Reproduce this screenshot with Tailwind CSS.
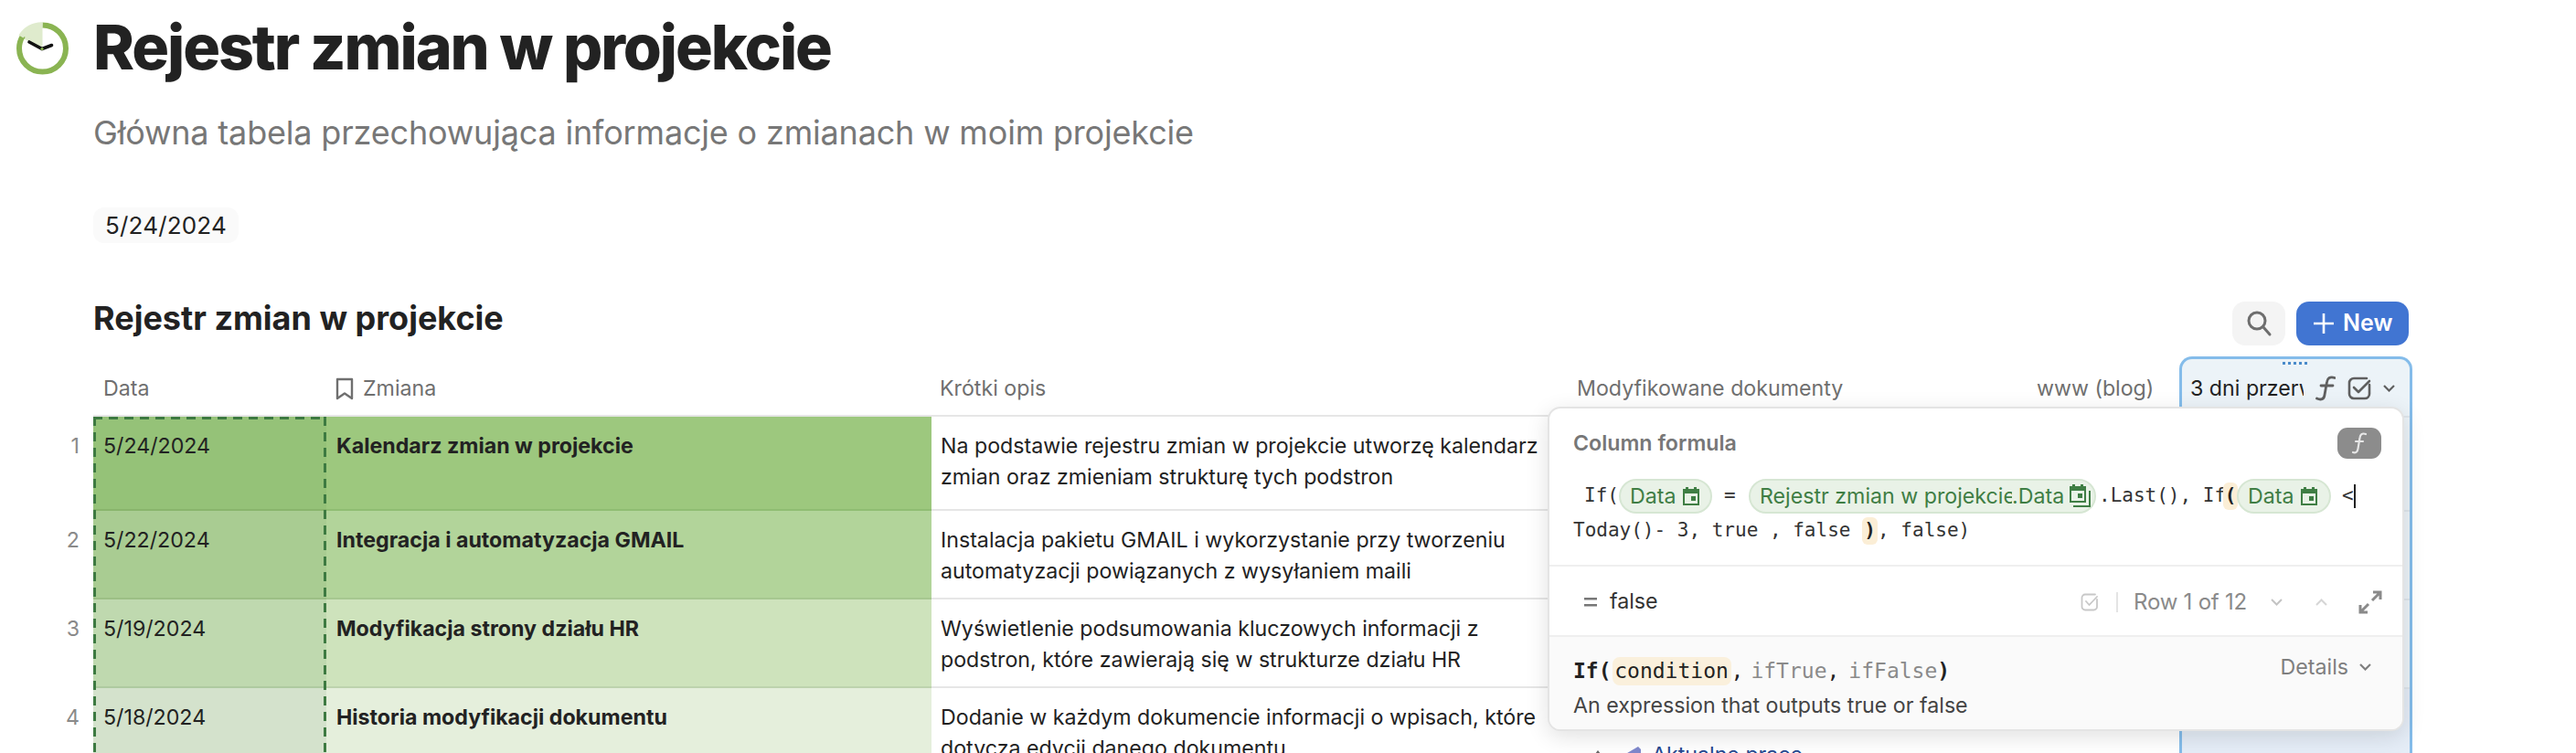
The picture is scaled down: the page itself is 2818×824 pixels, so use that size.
<!DOCTYPE html>
<html lang="pl">
<head>
<meta charset="utf-8">
<title>Rejestr zmian w projekcie</title>
<script src="https://cdn.jsdelivr.net/npm/@tailwindcss/browser@4"></script>
</head>
<body class="bg-white">
<div class="relative w-[2818px] h-[824px] overflow-hidden bg-white font-['Inter',sans-serif] text-[23.2px] text-[#222]">

  <!-- Page header -->
  <div class="flex h-[102px] items-center pl-[18px]">
    <svg class="w-[57px] h-[58px] shrink-0 mt-[3px]" viewBox="0 0 57 58">
      <path d="M28.5 29 L28.5 3 A26 26 0 0 0 5 17 Z" fill="#dfebcd"/>
      <circle cx="28.5" cy="29" r="25.5" fill="none" stroke="#8ab452" stroke-width="6" stroke-dasharray="134 26.3" stroke-dashoffset="0" transform="rotate(-90 28.5 29)"/>
      <path d="M5 16 A26 26 0 0 1 28.5 3.2" fill="none" stroke="#dfebcd" stroke-width="6"/>
      <path d="M14 22 L28 29.5 L38.5 25.5" fill="none" stroke="#111" stroke-width="3.6" stroke-linecap="round"/>
      <circle cx="28" cy="29.5" r="1.6" fill="#8ab452"/>
    </svg>
    <h1 class="ml-[27px] text-[68px] leading-[80px] font-extrabold tracking-[-2.07px] text-[#222]">Rejestr zmian w projekcie</h1>
  </div>

  <!-- Subtitle -->
  <p class="mt-[23px] ml-[102px] h-[40px] text-[36px] leading-[40px] tracking-[-0.18px] text-[#777]">Główna tabela przechowująca informacje o zmianach w moim projekcie</p>

  <!-- Date chip -->
  <div class="mt-[62px] ml-[102px] flex h-[39px] w-[159px] items-center justify-center rounded-[12px] bg-[#fafafa] text-[26px] tracking-[0.19px] text-[#222]">5/24/2024</div>

  <!-- Table toolbar -->
  <div class="mt-[64px] flex h-[48px] w-[2635px] items-start pl-[102px]">
    <h2 class="h-[36px] text-[36px] leading-[36px] font-bold text-[#222]">Rejestr zmian w projekcie</h2>
    <div class="ml-auto flex gap-[12px]">
      <button class="flex h-[48px] w-[58px] items-center justify-center rounded-[14px] bg-[#f4f4f4]">
        <svg class="w-[30px] h-[30px]" viewBox="0 0 30 30" fill="none" stroke="#6e6e6e" stroke-width="3" stroke-linecap="round"><circle cx="13" cy="12" r="9"/><path d="M20 19 L27 27"/></svg>
      </button>
      <button class="flex h-[48px] w-[123px] items-center rounded-[14px] bg-[#4175d2] pl-[19px] text-[25px] font-semibold text-white">
        <svg class="w-[22px] h-[22px] mr-[10px]" viewBox="0 0 22 22" fill="none" stroke="#fff" stroke-width="2.6"><path d="M11 0 V22 M0 11 H22"/></svg>New
      </button>
    </div>
  </div>

  <!-- Table -->
  <div class="relative mt-[12px] flex h-[434px]">
    <!-- Row numbers -->
    <div class="w-[102px] shrink-0 pt-[66px] text-right text-[#8a8a8a]">
      <div class="h-[103px] pt-[15px] pr-[15px] leading-[34px]">1</div>
      <div class="h-[97px] pt-[15px] pr-[15px] leading-[34px]">2</div>
      <div class="h-[97px] pt-[15px] pr-[15px] leading-[34px]">3</div>
      <div class="h-[97px] pt-[15px] pr-[15px] leading-[34px]">4</div>
    </div>

    <div class="relative w-[2282px] shrink-0">
      <!-- Header row -->
      <div class="flex h-[66px] items-start border-b-[2px] border-[#e6e6e6] pt-[20px] leading-[30px] text-[#6f6f6f]">
        <div class="w-[255px] pl-[11px]">Data</div>
        <div class="flex w-[662px] items-center pl-[10px]">
          <svg class="w-[20px] h-[25px] mr-[10px]" viewBox="0 0 20 25" fill="none" stroke="#6f6f6f" stroke-width="2.4" stroke-linejoin="round"><path d="M2 2 H18 V23 L10 17.5 L2 23 Z"/></svg>Zmiana
        </div>
        <div class="w-[696px] pl-[9px]">Krótki opis</div>
        <div class="w-[503px] pl-[10px]">Modyfikowane dokumenty</div>
        <div class="pl-[10px]">www (blog)</div>
      </div>

      <!-- Row 1 -->
      <div class="flex h-[103px] border-b-[2px] border-[#e6e6e6] leading-[34px]">
        <div class="w-[255px] -mb-[2px] border-b-[2px] border-[#89b56c] bg-[#95c278] pt-[15px] pl-[11px]">5/24/2024</div>
        <div class="w-[662px] -mb-[2px] border-b-[2px] border-[#8fbd72] bg-[#9dc87e] pt-[15px] pl-[11px] font-bold">Kalendarz zmian w projekcie</div>
        <div class="w-[690px] pt-[15px] pl-[10px]">Na podstawie rejestru zmian w projekcie utworzę kalendarz<br>zmian oraz zmieniam strukturę tych podstron</div>
      </div>
      <!-- Row 2 -->
      <div class="flex h-[97px] border-b-[2px] border-[#e6e6e6] leading-[34px]">
        <div class="w-[255px] -mb-[2px] border-b-[2px] border-[#9cbf85] bg-[#a9cc92] pt-[15px] pl-[11px]">5/22/2024</div>
        <div class="w-[662px] -mb-[2px] border-b-[2px] border-[#a6c790] bg-[#b2d49a] pt-[15px] pl-[11px] font-bold">Integracja i automatyzacja GMAIL</div>
        <div class="w-[690px] pt-[15px] pl-[10px]">Instalacja pakietu GMAIL i wykorzystanie przy tworzeniu<br>automatyzacji powiązanych z wysyłaniem maili</div>
      </div>
      <!-- Row 3 -->
      <div class="flex h-[97px] border-b-[2px] border-[#e6e6e6] leading-[34px]">
        <div class="w-[255px] -mb-[2px] border-b-[2px] border-[#aecaa0] bg-[#bfd9af] pt-[15px] pl-[11px]">5/19/2024</div>
        <div class="w-[662px] -mb-[2px] border-b-[2px] border-[#bdd3ad] bg-[#cee3bc] pt-[15px] pl-[11px] font-bold">Modyfikacja strony działu HR</div>
        <div class="w-[690px] pt-[15px] pl-[10px]">Wyświetlenie podsumowania kluczowych informacji z<br>podstron, które zawierają się w strukturze działu HR</div>
      </div>
      <!-- Row 4 -->
      <div class="flex h-[97px] leading-[34px]">
        <div class="w-[255px] bg-[#d4e2cc] pt-[15px] pl-[11px]">5/18/2024</div>
        <div class="w-[662px] bg-[#e5efdc] pt-[15px] pl-[11px] font-bold">Historia modyfikacji dokumentu</div>
        <div class="w-[696px] pt-[15px] pl-[10px]">Dodanie w każdym dokumencie informacji o wpisach, które<br>dotyczą edycji danego dokumentu</div>
        <div class="flex items-start pl-[30px] text-[#26478f]">
          <svg class="mt-[68px] w-[6px] h-[4px] mr-[24px]" viewBox="0 0 6 4"><path d="M0 4 L3 0 L6 4 Z" fill="#666"/></svg>
          <svg class="mt-[64px] w-[20px] h-[10px] mr-[12px]" viewBox="0 0 20 10"><path d="M0 10 L17 0 L20 3 L20 10 Z" fill="#7f88cc"/></svg>
          <span class="mt-[56px]">Aktualne prace</span>
        </div>
      </div>

      <!-- Dashed selection over the Data column -->
      <svg class="absolute left-0 top-[66px] w-[255px] h-[368px]" viewBox="0 0 255 368" fill="none" stroke="#3d7a41" stroke-width="3" stroke-dasharray="10 7">
        <path d="M0 1.5 H255"/>
        <path d="M1.5 0 V368"/>
        <path d="M253.5 0 V368"/>
      </svg>
    </div>

    <!-- Selected formula column -->
    <div class="w-[255px] shrink-0 rounded-t-[14px] border-x-[3px] border-t-[3px] border-[#84bcea] bg-[#ecf3f8]">
      <div class="flex justify-center gap-[3px] pt-[3px] pr-[2px]">
        <i class="block h-[3px] w-[3px] bg-[#4a8bcb]"></i><i class="block h-[3px] w-[3px] bg-[#4a8bcb]"></i><i class="block h-[3px] w-[3px] bg-[#4a8bcb]"></i><i class="block h-[3px] w-[3px] bg-[#4a8bcb]"></i><i class="block h-[3px] w-[3px] bg-[#4a8bcb]"></i>
      </div>
      <div class="flex h-[56px] items-center pb-[4px] pl-[9px]">
        <span class="w-[124px] overflow-hidden whitespace-nowrap">3 dni przerwy</span>
        <svg class="w-[22px] h-[28px] ml-[13px]" viewBox="0 0 22 28" fill="none" stroke="#5f5f5f" stroke-width="2.8" stroke-linecap="round"><path d="M21 2.5 C16 0.5 13 3 12.5 7 L10 21 C9.5 26 6 27 1.5 25 M6 11 H19"/></svg>
        <svg class="w-[26px] h-[26px] ml-[13px]" viewBox="0 0 26 26" fill="none" stroke="#5f5f5f" stroke-width="2.6" stroke-linecap="round" stroke-linejoin="round"><path d="M24 9 V19 A5 5 0 0 1 19 24 H7 A5 5 0 0 1 2 19 V7 A5 5 0 0 1 7 2 H21"/><path d="M7 12 L12 17 L24 5"/></svg>
        <svg class="w-[13px] h-[8px] ml-[13px]" viewBox="0 0 13 8" fill="none" stroke="#5f5f5f" stroke-width="2.2"><path d="M1 1 L6.5 6.5 L12 1"/></svg>
      </div>
      <div class="h-[103px] border-t-[2px] border-[#dfe6ec]"></div>
      <div class="h-[97px] border-t-[2px] border-[#dfe6ec]"></div>
      <div class="h-[97px] border-t-[2px] border-[#dfe6ec]"></div>
      <div class="h-[97px] border-t-[2px] border-[#dfe6ec] bg-[#e5edf7]"></div>
    </div>
  </div>

  <!-- Formula popover -->
  <div class="absolute left-[1693px] top-[445px] flex h-[355px] w-[937px] flex-col overflow-hidden rounded-[14px] border-[2px] border-[#e4e4e4] bg-white shadow-[0_6px_24px_rgba(0,0,0,0.12)]">
    <div class="h-[173px] shrink-0 border-b-[2px] border-[#efefef] pl-[26px]">
      <div class="flex h-[77px] items-start pr-[23px] pt-[21px]">
        <span class="mt-[0px] font-semibold leading-[34px] text-[#777]">Column formula</span>
        <span class="ml-auto flex h-[34px] w-[48px] items-center justify-center rounded-[11px] bg-[#8c8c8c]">
          <svg class="w-[16px] h-[24px]" viewBox="0 0 16 24" fill="none" stroke="#e6e6e6" stroke-width="2.2" stroke-linecap="round"><path d="M15 2 C11 0.5 9 2.5 8.5 6 L6.5 18 C6 22 3.5 23 1 22 M4 10 H12"/></svg>
        </span>
      </div>
      <!-- Line 1 -->
      <div class="flex h-[38px] items-center font-['DejaVu_Sans_Mono',monospace] text-[21px] text-[#333]">
        <span class="ml-[12px] w-[38px]">If(</span>
        <span class="flex h-[38px] w-[102px] items-center rounded-full border-[2px] border-[#d6e6d3] bg-[#e9f2e7] pl-[10px] font-['Inter',sans-serif] text-[23.2px] text-[#3f7e44]">Data
          <svg class="w-[18px] h-[20px] ml-[8px]" viewBox="0 0 18 20"><path fill="#3f7e44" fill-rule="evenodd" d="M3 0 H6 V2 H12 V0 H15 V2 H18 V20 H0 V2 H3 Z M2 7 V18 H16 V7 Z M9 10 H14 V15 H9 Z"/></svg>
        </span>
        <span class="ml-[13px] w-[27px]">=</span>
        <span class="flex h-[38px] w-[380px] items-center rounded-full border-[2px] border-[#d6e6d3] bg-[#e9f2e7] pl-[10px] font-['Inter',sans-serif] text-[23.2px] text-[#3f7e44]">
          <span class="w-[276px] shrink-0 overflow-hidden whitespace-nowrap">Rejestr zmian w projekcie</span><span>.Data</span>
          <svg class="w-[24px] h-[26px] ml-[6px] shrink-0" viewBox="0 0 24 26"><path fill="#3f7e44" fill-rule="evenodd" d="M3 0 H6 V2 H12 V0 H15 V2 H18 V20 H0 V2 H3 Z M2 7 V18 H16 V7 Z M9 10 H14 V15 H9 Z"/><path d="M22 7 V24 H4" fill="none" stroke="#3f7e44" stroke-width="2"/></svg>
        </span>
        <span class="ml-[3px] w-[136px] whitespace-pre">.Last(), If</span>
        <span class="flex h-[30px] w-[16px] items-center justify-center rounded-[6px] bg-[#fbeed6] font-bold text-[#222]">(</span>
        <span class="-ml-[1px] flex h-[38px] w-[103px] items-center rounded-full border-[2px] border-[#d6e6d3] bg-[#e9f2e7] pl-[10px] font-['Inter',sans-serif] text-[23.2px] text-[#3f7e44]">Data
          <svg class="w-[18px] h-[20px] ml-[8px]" viewBox="0 0 18 20"><path fill="#3f7e44" fill-rule="evenodd" d="M3 0 H6 V2 H12 V0 H15 V2 H18 V20 H0 V2 H3 Z M2 7 V18 H16 V7 Z M9 10 H14 V15 H9 Z"/></svg>
        </span>
        <span class="ml-[12px]">&lt;</span>
        <span class="h-[26px] w-[2px] bg-[#222]"></span>
      </div>
      <!-- Line 2 -->
      <div class="flex h-[38px] items-center whitespace-pre font-['DejaVu_Sans_Mono',monospace] text-[21px] text-[#333]">Today()- 3, true , false <span class="flex h-[30px] w-[17px] items-center justify-center rounded-[6px] bg-[#fbeed6] font-bold text-[#222]">)</span>, false)</div>
    </div>

    <!-- Result row -->
    <div class="flex h-[77px] shrink-0 items-center border-b-[2px] border-[#efefef] pt-[2px] pl-[38px] pr-[22px]">
      <svg class="w-[14px] h-[10px]" viewBox="0 0 14 10" fill="#777"><path d="M0 0 H14 V2.4 H0 Z M0 7 H14 V9.4 H0 Z"/></svg>
      <span class="ml-[14px] text-[#333]">false</span>
      <svg class="ml-auto w-[20px] h-[20px]" viewBox="0 0 20 20" fill="none" stroke="#c8c8c8" stroke-width="1.8" stroke-linecap="round" stroke-linejoin="round"><path d="M18 7 V15 A3.5 3.5 0 0 1 14.5 18.5 H5 A3.5 3.5 0 0 1 1.5 15 V5 A3.5 3.5 0 0 1 5 1.5 H16"/><path d="M6 9 L9.5 13 L18 4"/></svg>
      <span class="ml-[19px] h-[22px] w-[2px] bg-[#e4e4e4]"></span>
      <span class="ml-[17px] text-[24px] tracking-[-0.22px] text-[#8a8a8a]">Row 1 of 12</span>
      <svg class="ml-[26px] w-[13px] h-[8px]" viewBox="0 0 13 8" fill="none" stroke="#c4c4c4" stroke-width="2"><path d="M1 1 L6.5 6.5 L12 1"/></svg>
      <svg class="ml-[36px] w-[13px] h-[8px]" viewBox="0 0 13 8" fill="none" stroke="#d6d6d6" stroke-width="2"><path d="M1 7 L6.5 1.5 L12 7"/></svg>
      <svg class="ml-[34px] w-[26px] h-[26px]" viewBox="0 0 26 26" fill="none" stroke="#8a8a8a" stroke-width="3"><path d="M15 11 L24 2 M16 2 H24 V10 M11 15 L2 24 M2 16 V24 H10"/></svg>
    </div>

    <!-- Function help -->
    <div class="relative flex-1 bg-[#fafafa] pl-[26px] pr-[34px]">
      <div class="flex h-[53px] items-end whitespace-pre">
        <div class="flex h-[31px] items-center font-['DejaVu_Sans_Mono',monospace] text-[23px] text-[#222]"><b>If(</b><span class="ml-[1px] flex h-[31px] w-[130px] items-center justify-center rounded-[8px] bg-[#faf0dc]">condition</span><span>,</span><span class="ml-[8px] text-[#8a8a8a]">ifTrue</span><span>,</span><span class="ml-[10px] text-[#8a8a8a]">ifFalse</span><b>)</b></div>
      </div>
      <div class="mt-[7px] leading-[30px] text-[#444]">An expression that outputs true or false</div>
      <div class="absolute right-[34px] top-[16px] flex items-center text-[#7f7f7f]">Details
        <svg class="ml-[12px] w-[13px] h-[8px]" viewBox="0 0 13 8" fill="none" stroke="#7f7f7f" stroke-width="2.2"><path d="M1 1 L6.5 6.5 L12 1"/></svg>
      </div>
    </div>
  </div>
</div>
</body>
</html>
